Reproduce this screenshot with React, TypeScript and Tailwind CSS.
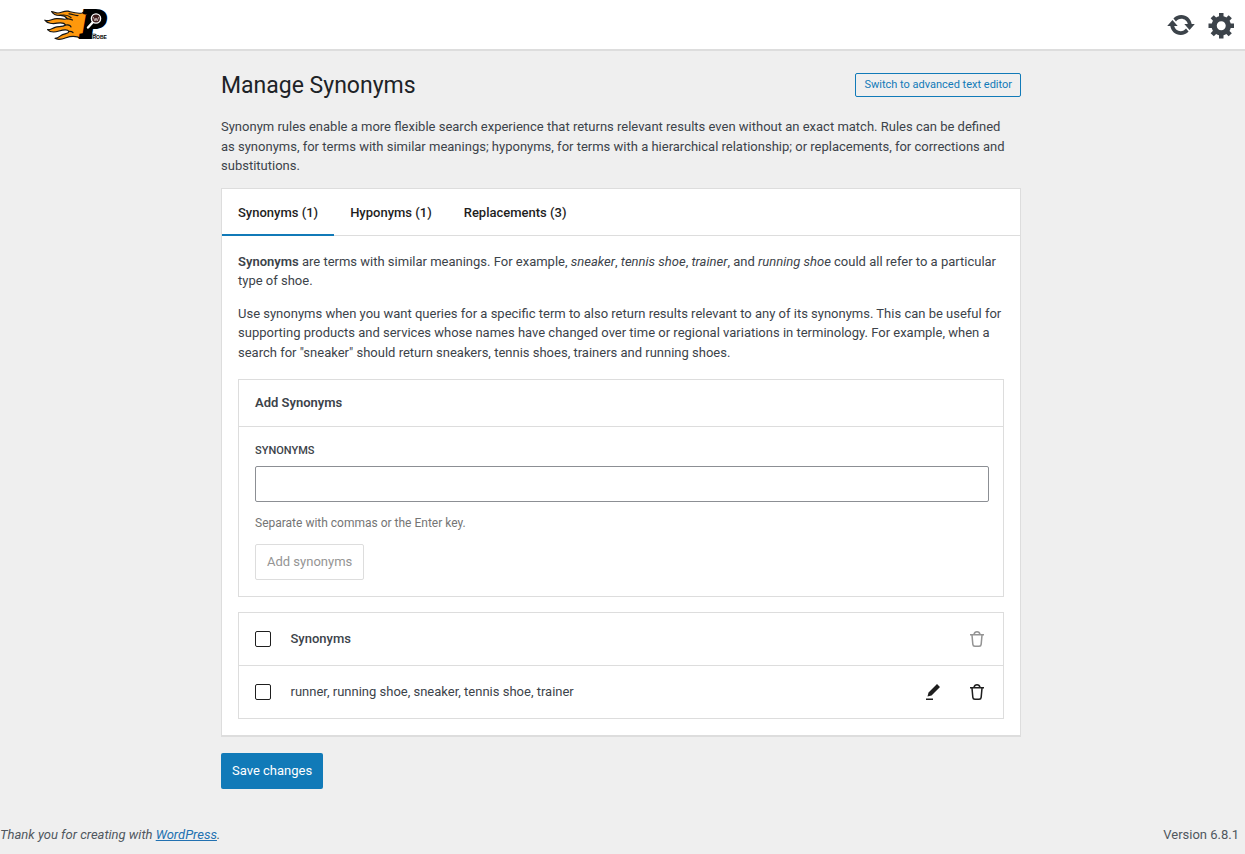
import { useState } from 'react';

function Logo() {
  return (
    <svg viewBox="0 -8 64 49" className="h-[49px] w-16" role="img" aria-label="Probe">
      <path
        d="M44 2.500 L38 5 C33 6 29 4.500 24 3.200 C20 2.500 17.500 5 14 5 C11 5 10 3.500 7.500 3.500 C9 6 12 7.500 16 7.400 C19 7.200 22 9 23.500 10.800 C20 12.200 17 10.200 12.500 10.600 C8 11 4 13.700 0.800 12.200 C3 15.500 9 16 13 15.200 C17 14.500 20.500 15 21.500 17 C19 19.200 15 18.300 11 19.300 C8.500 20 6 22.300 3.500 21.600 C6.500 24.800 11 24.300 15 23 C19 21.800 24 21.500 25 23.500 C24.500 26 20 25.500 17 27.500 C15 29 13.500 30.300 11 30.300 C14 32.300 18 31.300 22 29.700 C27 28 32 27.500 37 30.500 L44 30 Z"
        fill="#ff980c"
        stroke="#151515"
        strokeWidth="1.200"
        strokeLinejoin="round"
      />
      <path
        d="M16 7.400 C20 6.600 24 7 27 9.500 M25 5.800 C29 6 30.500 8 34 7.500 M23.500 10.800 C26 11 27 11 28.500 12 M21.500 17 C24 16.500 26.500 17.300 27 19 M25 23.500 C27 23.300 28 23.600 29 24.500"
        fill="none"
        stroke="#151515"
        strokeWidth="1.200"
        strokeLinecap="round"
      />
      <text x="37" y="29" fontFamily="Liberation Serif, serif" fontWeight="700" fontStyle="italic" fontSize="39" fill="#000" stroke="#000" strokeWidth="4">
        P
      </text>
      <path d="M49 14 L44 19.500" stroke="#fff" strokeWidth="2.400" strokeLinecap="round" />
      <circle cx="52" cy="10.500" r="4.600" fill="#3f1d1d" stroke="#fff" strokeWidth="1.400" />
      <path d="M49.300 9 L51 13 L52 10 L53.200 13 L54.800 9" fill="none" stroke="#d8cccc" strokeWidth="0.800" />
      <text x="48.500" y="31" fontFamily="Liberation Sans, sans-serif" fontWeight="700" fontSize="5" fill="#000" stroke="#fff" strokeWidth="1.200" paintOrder="stroke">
        ROBE
      </text>
    </svg>
  );
}

const headerIcons = [
  {
    label: 'Sync',
    path: 'M10.2 3.28c3.53 0 6.43 2.61 6.92 6h2.08l-3.5 4-3.5-4h2.32c-.45-1.97-2.21-3.45-4.32-3.45-1.45 0-2.73.71-3.54 1.78L4.95 5.66C6.23 4.2 8.11 3.28 10.2 3.28zm-.4 13.44c-3.52 0-6.43-2.61-6.92-6H.8l3.5-4c1.17 1.33 2.33 2.67 3.5 4H5.48c.45 1.97 2.21 3.45 4.32 3.45 1.45 0 2.73-.71 3.54-1.78l1.71 1.95c-1.28 1.46-3.15 2.38-5.25 2.38z',
  },
  {
    label: 'Settings',
    path: 'M18 12h-2.18c-.17.7-.44 1.35-.81 1.93l1.54 1.54-2.1 2.1-1.54-1.54c-.58.36-1.23.63-1.91.79V19H8v-2.18c-.68-.16-1.33-.43-1.91-.79l-1.54 1.54-2.12-2.12 1.54-1.54c-.36-.58-.63-1.23-.79-1.91H1V9.03h2.17c.16-.7.44-1.35.8-1.94L2.43 5.55l2.1-2.1 1.54 1.54c.58-.37 1.24-.64 1.93-.81V2h3v2.18c.68.16 1.33.43 1.91.79l1.54-1.54 2.12 2.12-1.54 1.54c.36.59.64 1.24.8 1.94H18V12zm-8.5 1.5c1.66 0 3-1.34 3-3s-1.34-3-3-3-3 1.34-3 3 1.34 3 3 3z',
  },
];

function TrashIcon() {
  return (
    <svg viewBox="0 0 24 24" className="size-6" fill="currentColor" fillRule="evenodd" aria-hidden="true">
      <path d="M12 5.5A2.25 2.25 0 0 0 9.878 7h4.244A2.251 2.251 0 0 0 12 5.5ZM12 4a3.751 3.751 0 0 0-3.675 3H5v1.5h1.27l.818 8.997a2.75 2.75 0 0 0 2.739 2.501h4.347a2.75 2.75 0 0 0 2.738-2.5L17.73 8.5H19V7h-3.325A3.751 3.751 0 0 0 12 4Zm4.224 4.5H7.776l.806 8.861a1.25 1.25 0 0 0 1.245 1.137h4.347a1.25 1.25 0 0 0 1.245-1.137l.805-8.861Z" />
    </svg>
  );
}

function EditIcon() {
  return (
    <svg viewBox="0 0 24 24" className="size-6" fill="currentColor" aria-hidden="true">
      <path d="m19 7-3-3-8.5 8.5-1 4 4-1L19 7Zm-7 11.5H5V20h7v-1.5Z" />
    </svg>
  );
}

function Checkbox({ id, label }: { id: string; label?: string }) {
  return (
    <input
      id={id}
      type="checkbox"
      aria-label={label}
      className="size-4 shrink-0 appearance-none rounded-xs border border-[#1e1e1e] bg-white checked:bg-[#117ab8]"
    />
  );
}

const tabs = ['Synonyms (1)', 'Hyponyms (1)', 'Replacements (3)'];

export default function App() {
  const [active, setActive] = useState(0);
  const [terms, setTerms] = useState('');

  return (
    <div className="flex min-h-screen flex-col bg-[#efefef] font-[Roboto,'Liberation_Sans',sans-serif] text-[13px] leading-normal text-[#3c434a]">
      <header className="flex h-[51px] items-center justify-between border-b-2 border-[#dddddd] bg-white pr-2 pl-11">
        <Logo />
        <div className="flex gap-[11px] pt-px">
          {headerIcons.map((icon) => (
            <button key={icon.label} type="button" aria-label={icon.label}>
              <svg viewBox="0 0 20 20" className="size-[30px]" fill="#3c434a" aria-hidden="true">
                <path d={icon.path} />
              </svg>
            </button>
          ))}
        </div>
      </header>

      <main className="grow pt-[22px] pr-[3px]">
        <div className="mx-auto max-w-[800px]">
          <div className="flex h-6 items-center justify-between">
            <h1 className="pt-0.5 text-[23px] text-[#1d2327]">Manage Synonyms</h1>
            <button type="button" className="h-6 rounded-xs border border-[#117ab8] px-2 text-[11px] text-[#117ab8]">
              Switch to advanced text editor
            </button>
          </div>

          <p className="mt-5 pr-2">
            Synonym rules enable a more flexible search experience that returns relevant results even without an exact match. Rules can be defined as
            synonyms, for terms with similar meanings; hyponyms, for terms with a hierarchical relationship; or replacements, for corrections and
            substitutions.
          </p>

          <section className="mt-3 border border-b-2 border-[#dddddd] bg-white">
            <div role="tablist" className="flex h-[47px] border-b border-[#dddddd]">
              {tabs.map((tab, i) => (
                <button
                  key={tab}
                  type="button"
                  role="tab"
                  aria-selected={i === active}
                  onClick={() => setActive(i)}
                  className={`-mb-px border-b-2 px-4 pt-[3px] font-medium text-[#1e1e1e] ${i === active ? 'border-[#117ab8]' : 'border-transparent'}`}
                >
                  {tab}
                </button>
              ))}
            </div>

            <div className="flex flex-col gap-[15px] p-4">
              <div className="flex flex-col gap-[13px] pb-0.5">
                <p>
                  <strong className="font-semibold">Synonyms</strong> are terms with similar meanings. For example, <em>sneaker</em>, <em>tennis shoe</em>,{' '}
                  <em>trainer</em>, and <em>running shoe</em> could all refer to a particular type of shoe.
                </p>
                <p>
                  Use synonyms when you want queries for a specific term to also return results relevant to any of its synonyms. This can be useful for
                  supporting products and services whose names have changed over time or regional variations in terminology. For example, when a search for
                  "sneaker" should return sneakers, tennis shoes, trainers and running shoes.
                </p>
              </div>

              <form className="border border-[#dddddd]" onSubmit={(e) => e.preventDefault()}>
                <h2 className="flex h-[47px] items-center border-b border-[#dddddd] px-4 font-semibold">Add Synonyms</h2>
                <div className="flex flex-col items-start pt-4 pr-[14px] pb-4 pl-4">
                  <label htmlFor="terms" className="text-[11px] leading-4 font-medium uppercase">
                    Synonyms
                  </label>
                  <input
                    id="terms"
                    value={terms}
                    onChange={(e) => setTerms(e.target.value)}
                    className="mt-[7px] h-9 w-full rounded-xs border border-[#8c8f94] bg-white px-2 outline-none"
                  />
                  <p className="mt-3 text-xs leading-[18px] text-[#757575]">Separate with commas or the Enter key.</p>
                  <button type="submit" disabled className="mt-3 h-9 rounded-xs border border-[#dddddd] px-[11px] text-[#949494]">
                    Add synonyms
                  </button>
                </div>
              </form>

              <table className="w-full border border-[#dddddd]">
                <thead>
                  <tr className="h-[53px] border-b border-[#dddddd]">
                    <th className="w-[52px] pl-4 text-left">
                      <span className="flex">
                        <Checkbox id="all" label="Select all" />
                      </span>
                    </th>
                    <th className="text-left font-medium">Synonyms</th>
                    <th className="pr-[14px]">
                      <span className="flex justify-end">
                        <button type="button" disabled aria-label="Delete selected" className="text-[#949494]">
                          <TrashIcon />
                        </button>
                      </span>
                    </th>
                  </tr>
                </thead>
                <tbody>
                  <tr className="h-[53px]">
                    <td className="pl-4">
                      <span className="flex">
                        <Checkbox id="row-1" />
                      </span>
                    </td>
                    <td>
                      <label htmlFor="row-1">runner, running shoe, sneaker, tennis shoe, trainer</label>
                    </td>
                    <td className="pr-[14px]">
                      <span className="flex justify-end gap-5 text-[#1e1e1e]">
                        <button type="button" aria-label="Edit">
                          <EditIcon />
                        </button>
                        <button type="button" aria-label="Delete">
                          <TrashIcon />
                        </button>
                      </span>
                    </td>
                  </tr>
                </tbody>
              </table>
            </div>
          </section>

          <button type="button" className="mt-4 h-9 rounded-xs bg-[#117ab8] px-[11px] text-white">
            Save changes
          </button>
        </div>
      </main>

      <footer className="flex justify-between pr-[6px] pb-[10px] text-[#50575e]">
        <p className="italic">
          Thank you for creating with{' '}
          <a href="#wordpress" className="text-[#2271b1] underline">
            WordPress
          </a>
          .
        </p>
        <p>Version 6.8.1</p>
      </footer>
    </div>
  );
}
